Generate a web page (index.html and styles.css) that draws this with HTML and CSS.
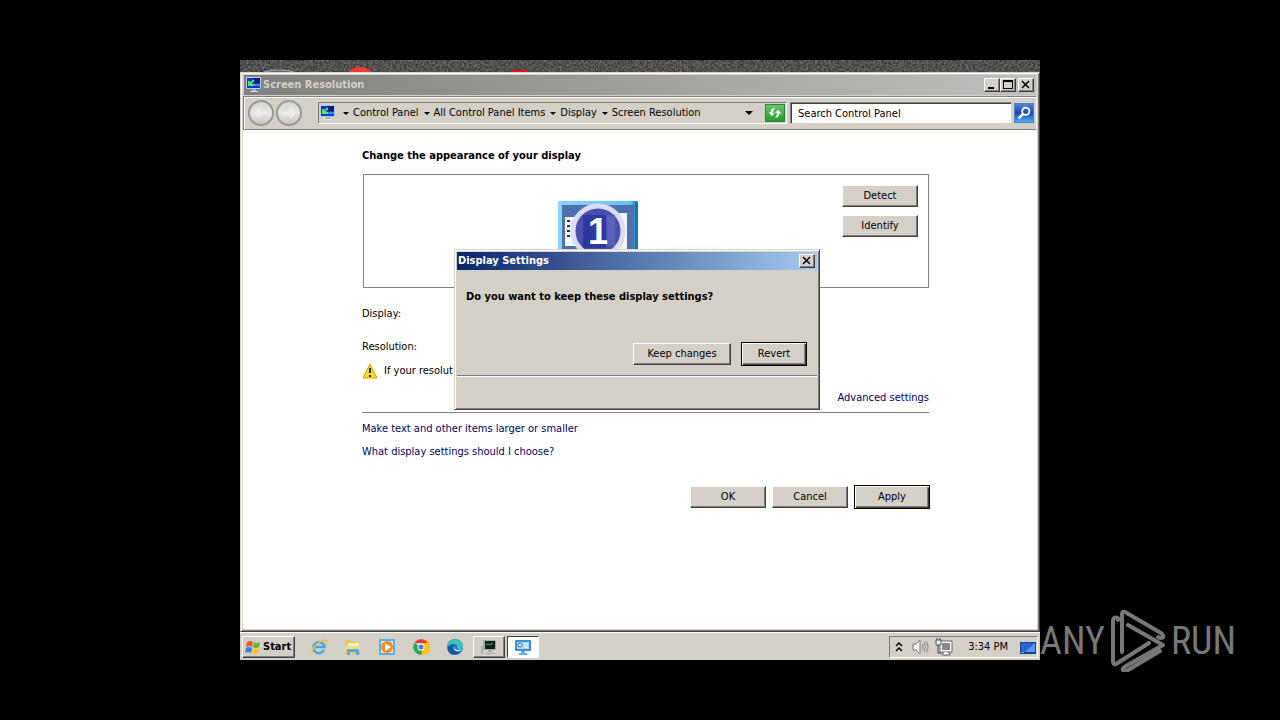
FILE: index.html
```html
<!DOCTYPE html>
<html lang="en">
<head>
<meta charset="utf-8">
<title>Screen Resolution</title>
<link rel="stylesheet" href="styles.css">
</head>
<body>
<svg class="defs" aria-hidden="true">
  <symbol id="monitor" viewBox="0 0 16 16">
    <rect x="0" y="0" width="15" height="12" rx="1" fill="#b9cbe6"/>
    <rect x="1" y="1" width="13" height="10" fill="#0a3fc4"/>
    <path d="M7 1h7v5H7z" fill="#071c70"/><path d="M8 7h6v2H8z" fill="#2f8df0"/>
    <path d="M8 3 4 7M3 4v4h5" stroke="#5fe06a" stroke-width="2" fill="none"/>
    <path d="M6 12h4v2H6z" fill="#9fb2c8"/><path d="M4 14h8v1H4z" fill="#d8e4f0"/>
  </symbol>
  <symbol id="close" viewBox="0 0 10 10"><path d="M1 1l7 7M8 1 1 8" stroke="#000" stroke-width="1.500"/></symbol>
</svg>
<div class="screen">
  <main class="desktop">
    <svg class="wallpaper" aria-hidden="true">
      <filter id="grain" color-interpolation-filters="sRGB"><feTurbulence type="fractalNoise" baseFrequency=".45" numOctaves="2" seed="4"/><feColorMatrix values=".4 0 0 0 .12  .4 0 0 0 .12  .4 0 0 0 .11  0 0 0 0 1"/></filter>
      <rect width="100%" height="100%" filter="url(#grain)"/>
      <ellipse cx="39" cy="16" rx="20" ry="6" fill="#666" stroke="#aaa"/>
      <circle cx="120" cy="24" r="17" fill="#f03a30"/>
      <path d="M271 10h17v3h-17z" fill="#e11"/>
    </svg>
    <section class="window">
      <header class="titlebar">
        <svg class="title-icon"><use href="#monitor"/></svg>
        <h1 class="title">Screen Resolution</h1>
        <button class="caption" aria-label="Minimize"><svg viewBox="0 0 10 10"><path d="M1 7h6v2H1z"/></svg></button>
        <button class="caption" aria-label="Maximize"><svg viewBox="0 0 10 10"><path d="M0 0h10v9H0zM1 2v6h8V2z" fill-rule="evenodd"/></svg></button>
        <button class="caption caption-close" aria-label="Close"><svg><use href="#close"/></svg></button>
      </header>
      <nav class="toolbar">
        <button class="round" aria-label="Back"><svg viewBox="0 0 26 26"><path d="M20 13H7m5-5-5 5 5 5"/></svg></button>
        <button class="round" aria-label="Forward"><svg viewBox="0 0 26 26"><path d="M6 13h13m-5-5 5 5-5 5"/></svg></button>
        <div class="address">
          <svg class="address-icon"><use href="#monitor"/></svg>
          <i class="arrow"></i><a href="#">Control Panel</a>
          <i class="arrow"></i><a href="#">All Control Panel Items</a>
          <i class="arrow"></i><a href="#">Display</a>
          <i class="arrow"></i><a href="#">Screen Resolution</a>
          <button class="history" aria-label="Previous locations"><i class="arrow arrow-large"></i></button>
          <button class="refresh" aria-label="Refresh"><svg viewBox="0 0 20 20"><path d="M2 9l4 5 4-4H7.500c0-3 1-4 2.500-6-4 0-5 2-5 5zM18 11l-4-5-4 4h2.500c0 3-1 4-2.500 6 4 0 5-2 5-5z" fill="#fff"/></svg></button>
        </div>
        <input class="search" type="text" aria-label="Search" placeholder="Search Control Panel">
        <button class="search-go" aria-label="Search"><svg viewBox="0 0 20 20"><circle cx="12" cy="8" r="4" fill="none" stroke="#fff" stroke-width="2"/><path d="M9 11l-5 5" stroke="#fff" stroke-width="3"/></svg></button>
      </nav>
      <div class="content">
        <h2 class="heading">Change the appearance of your display</h2>
        <div class="preview">
          <svg class="screen-one" viewBox="0 0 80 62" role="img" aria-label="Monitor 1">
            <defs><linearGradient id="frame" x2="1"><stop stop-color="#86d7fb"/><stop offset=".9" stop-color="#65c2f3"/><stop offset="1" stop-color="#1b73b8"/></linearGradient></defs>
            <rect width="80" height="62" rx="1" fill="url(#frame)"/>
            <path d="M77 1h3v61h-3z" fill="#1674b9"/>
            <rect x="4" y="4" width="72" height="58" fill="#4f70ae"/>
            <path d="M7 16h17v29H7zM58 12h11v37H58z" fill="#f4f5f8"/>
            <path d="M9 20h3M9 25h3M9 30h3M9 35h3" stroke="#333" stroke-width="2"/><path d="M14 20h3M14 25h3M14 30h3M14 35h3" stroke="#aaa"/>
            <circle cx="40" cy="30" r="25" fill="#4a50ad" stroke="#d8dcf4" stroke-width="5"/>
            <path d="M25 14h23v33H25z" fill="#3038a0"/><path d="M49 14h8v31h-8z" fill="#5960b7"/>
            <text x="40" y="43" text-anchor="middle" class="screen-number">1</text>
          </svg>
          <div class="preview-actions"><button class="button">Detect</button><button class="button">Identify</button></div>
        </div>
        <p class="field">Display:</p>
        <p class="field">Resolution:</p>
        <p class="warning"><svg viewBox="0 0 16 16"><path d="M8 1l7 14H1z" fill="#ffdc18" stroke="#d0a000" stroke-linejoin="round"/><path d="M8 5v5M8 12v2" stroke="#222" stroke-width="2"/></svg><span>If your resolut</span></p>
        <p class="advanced"><a href="#">Advanced settings</a></p>
        <p class="link-row"><a href="#">Make text and other items larger or smaller</a></p>
        <p class="link-row"><a href="#">What display settings should I choose?</a></p>
        <div class="actions"><button class="button">OK</button><button class="button">Cancel</button><button class="button button-default">Apply</button></div>
      </div>
    </section>
    <section class="dialog" role="dialog" aria-labelledby="dialog-title">
      <header class="dialog-bar"><h2 id="dialog-title" class="title">Display Settings</h2><button class="caption" aria-label="Close"><svg><use href="#close"/></svg></button></header>
      <p class="question">Do you want to keep these display settings?</p>
      <div class="dialog-actions"><button class="button button-wide">Keep changes</button><button class="button button-default">Revert</button></div>
      <div class="dialog-footer"></div>
    </section>
    <footer class="taskbar">
      <button class="start"><svg viewBox="0 0 18 18"><path d="M3 4q3-2 6 0L8 9Q5 7 2 9z" fill="#ef5a24"/><path d="M10 4q3 2 6 0l-1 5q-3 2-6 0z" fill="#65b62f"/><path d="M2 10q3-2 6 0l-1 5q-3-2-6 0z" fill="#2986d8"/><path d="M9 10q3 2 6 0l-1 5q-3 2-6 0z" fill="#fbc51c"/></svg>Start</button>
      <div class="tasks">
        <button class="task" aria-label="Internet Explorer"><svg viewBox="0 0 18 18"><path d="M14 12a5.500 5.500 0 1 1 .5-3H5" fill="none" stroke="#45a7e4" stroke-width="2.500"/><path d="M3 16C-1 13 8 3 15 2c2 0 2 2 1 4" fill="none" stroke="#efc24a" stroke-width="1.500"/></svg></button>
        <button class="task" aria-label="Explorer"><svg viewBox="0 0 18 18"><path d="M2 2h5l1 2h8v12H2z" fill="#e8c75f"/><path d="M4 5h11v7H4z" fill="#fff4b2"/><path d="M2 8h14v5H2z" fill="#f6dc82"/><path d="M3 17v-6h12v6h-3v-3H6v3z" fill="#58aee0"/></svg></button>
        <button class="task" aria-label="Media Player"><svg viewBox="0 0 18 18"><path d="M1 1h16v16H1z" fill="#5ab0e8"/><path d="M3 3h12v12H3z" fill="#d9eaf6"/><circle cx="9" cy="9" r="6" fill="#f58a1d"/><path d="M7 5l6 4-6 4z" fill="#fff"/></svg></button>
        <button class="task" aria-label="Chrome"><svg viewBox="0 0 18 18"><path d="M9 9V1.500h4A7.500 7.500 0 0 1 9 16.500z" fill="#fbc116"/><path d="M9 9l1 7.500A7.500 7.500 0 0 1 2.500 5z" fill="#2da94f"/><path d="M2.500 5a7.500 7.500 0 0 1 13 0H9z" fill="#e33b2e"/><circle cx="9" cy="9" r="3.500" fill="#fff"/><circle cx="9" cy="9" r="2.500" fill="#3b7ded"/></svg></button>
        <button class="task" aria-label="Edge"><svg viewBox="0 0 18 18"><circle cx="9" cy="9" r="8" fill="#1878c8"/><path d="M1 9C2-1 17-1 17 8c0 4-5 4-6 2 2-4-6-6-10-1z" fill="#39c2ba"/><path d="M8 7c-3 4 1 8 6 6-3 6-13 4-12-3 1-3 4-4 6-3z" fill="#1457a6"/><path d="M8 8c0 4 4 5 8 3l-2 2c-4 1-7-1-6-5z" fill="#e4f6fb"/></svg></button>
        <button class="task task-raised" aria-label="Display utility"><svg viewBox="0 0 18 18"><path d="M3 2h13v10H3z" fill="#a8aaaa"/><path d="M5 3h10v8H5z" fill="#0b211b"/><path d="M6 7l2-1 2 1 3-2" stroke="#4aaa7a" fill="none"/><path d="M8 12h4v2H8zM6 15h9v1H6z" fill="#a0a4a4"/><path d="M2 8v8" stroke="#888"/></svg></button>
        <button class="task task-active" aria-label="Screen Resolution"><svg viewBox="0 0 18 18"><rect x="1" y="2" width="16" height="11" rx="1" fill="#3a8fd2"/><path d="M3 4h12v7H3z" fill="#a7d7f3"/><circle cx="6" cy="7" r="2" fill="#fff" stroke="#256ba7"/><path d="M10 6h4M10 9h4" stroke="#fff"/><path d="M7 13h4v2H7zM5 15h8v2H5z" fill="#65aee0"/></svg></button>
      </div>
      <div class="tray">
        <svg class="chevron" viewBox="0 0 8 10"><path d="M1 4l3-3 3 3M1 9l3-3 3 3" fill="none" stroke="#000" stroke-width="1.500"/></svg>
        <svg class="tray-icon" viewBox="0 0 18 18"><path d="M2 6h3l4-4v14l-4-4H2z" fill="#f5f5f5" stroke="#777"/><path d="M11 6q2 3 0 6M13 4q3 5 0 10M15 3q4 6 0 12" stroke="#888" fill="none"/></svg>
        <svg class="tray-icon" viewBox="0 0 18 18"><path d="M5 3h12v11H5z" fill="#fff" stroke="#666"/><path d="M7 5h8v7H7z" fill="#888"/><path d="M9 14v1H7v2h8v-2h-2v-1" fill="#fff" stroke="#666"/><path d="M1 2h5v5H1z" fill="#eee" stroke="#555"/><path d="M2 0v2M5 0v2M3 7v8h3" stroke="#444" fill="none"/></svg>
        <time class="clock">3:34 PM</time>
        <svg class="tray-icon tray-display" viewBox="0 0 18 18"><path d="M1 4h16v12H1z" fill="#1b3f8e"/><path d="M2 5h14v9H2z" fill="#2766d4"/><path d="M6 14 16 5v9z" fill="#5898ed"/><path d="M2 14h3v1H2z" fill="#5c5"/></svg>
      </div>
    </footer>
  </main>
  <div class="watermark" aria-label="ANY RUN"><span>ANY</span><svg viewBox="0 0 56 62"><g fill="none" stroke="#777" stroke-width="4" stroke-linejoin="round" stroke-linecap="round"><path d="M8 10V8q-5-2-5 3v40q0 4 3 3l33-21"/><path d="M12 42V4q0-3 3-2l36 21q3 2 2 4-2 2-5 0"/><path d="M18 15l35 20-37 21q-4 2-3 4 1 2 5 0l32-19"/></g></svg><span>RUN</span></div>
</div>
</body>
</html>
```
FILE: styles.css
```css
* { box-sizing: border-box; }
body { margin: 0; background: #000; color: #000; font: 11px/16px Tahoma, "DejaVu Sans Condensed", "DejaVu Sans", sans-serif; }
h1, h2, p { margin: 0; font-size: 11px; }
button, input { font: inherit; color: inherit; }
button { padding: 0; border: 0; border-radius: 0; }
svg { display: block; }
a { color: #000066; text-decoration: none; white-space: nowrap; }
.defs { position: absolute; width: 0; height: 0; }
.screen { display: grid; grid-template-columns: 3fr 10fr 3fr; min-height: 100vh; padding: 60px 0; }
.desktop { position: relative; grid-column: 2; display: flex; flex-direction: column; background: #d4d0c8; }
.wallpaper { width: 100%; height: 12px; background: #555; }

.window { flex: 1; display: flex; flex-direction: column; padding: 2px; border: 1px solid #d4d0c8; border-right-color: #404040; border-bottom-color: #404040; box-shadow: inset 1px 1px #fff, inset -1px -1px #808080; }
.titlebar { display: flex; align-items: center; height: 20px; margin: 0 1px 1px; padding: 0 2px; background: linear-gradient(90deg, #808080, #c0c0c0); color: #d4d0c8; }
.title { flex: 1; white-space: nowrap; }
.title-icon { width: 16px; height: 16px; margin-right: 1px; }
.caption { display: grid; place-items: center; width: 16px; height: 14px; background: #d4d0c8; border: 1px solid #fff; border-right-color: #404040; border-bottom-color: #404040; box-shadow: inset -1px -1px #808080; }
.caption svg { width: 10px; height: 10px; }
.caption-close { margin-left: 2px; }
.toolbar { display: flex; align-items: center; gap: 2px; height: 34px; padding: 0 2px 0 4px; background: #d4d0c8; border: 1px solid #808080; border-right-color: #fff; box-shadow: inset 1px 1px #fff; }
.round { width: 26px; height: 26px; border: 2px solid #999; border-radius: 50%; background: linear-gradient(#d8d6d2, #e8e7e5 50%, #c8c6c2); }
.round svg { width: 22px; height: 22px; fill: none; stroke: #eeedeb; stroke-width: 3; }
.address { flex: 1; display: flex; align-items: center; height: 22px; margin-left: 14px; padding-left: 1px; border: 1px solid #808080; border-right-color: #fff; border-bottom-color: #fff; }
.address a { color: #000; }
.address-icon { width: 16px; height: 16px; margin-right: 2px; }
.arrow { margin: 0 4px 0 5px; border: 3px solid transparent; border-top-color: #000; border-bottom: 0; }
.arrow-large { margin: 0; border-width: 4px 4px 0; }
.history { display: grid; place-items: center; width: 16px; height: 18px; margin-left: auto; background: none; }
.refresh { width: 20px; height: 18px; margin: 0 1px 0 8px; border: 1px solid #268a35; background: linear-gradient(#6bc36d, #239b31); }
.refresh svg { width: 18px; height: 16px; }
.search { width: 222px; height: 22px; margin-left: 1px; padding: 0 7px; border: 1px solid #808080; border-right-color: #d4d0c8; border-bottom-color: #d4d0c8; box-shadow: inset 1px 1px #404040; background: #fff; }
.search::placeholder { color: #000; opacity: 1; }
.search-go { width: 20px; height: 20px; border: 1px solid #4c82c8; background: linear-gradient(#5482d8, #1845bb 50%, #4cb0ed); }
.search-go svg { width: 18px; height: 18px; }

.content { flex: 1; padding: 18px 107px 0 119px; background: #fff; }
.preview { display: flex; justify-content: flex-end; height: 114px; margin: 10px 1px 0; padding: 10px; border: 1px solid #808080; }
.screen-one { width: 80px; height: 62px; margin: 16px auto 0 184px; }
.screen-number { font: bold 36px "Liberation Sans", Arial, sans-serif; fill: #fff; }
.preview-actions { display: flex; flex-direction: column; gap: 8px; }
.button { min-width: 76px; height: 22px; background: #d4d0c8; border: 1px solid #fff; border-right-color: #404040; border-bottom-color: #404040; box-shadow: inset -1px -1px #808080; white-space: nowrap; }
.button-default { height: 24px; border-color: #000; box-shadow: inset 1px 1px #fff, inset -1px -1px #404040, inset -2px -2px #808080; }
.field { margin-top: 17px; }
.preview + .field { margin-top: 18px; }
.warning { display: flex; gap: 6px; margin-top: 8px; white-space: nowrap; }
.warning svg { width: 16px; height: 16px; }
.advanced { margin: 11px 1px 0 0; padding-bottom: 6px; border-bottom: 1px solid #808080; text-align: right; }
.link-row { margin-top: 7px; }
.advanced + .link-row { margin-top: 8px; }
.actions { display: flex; justify-content: flex-end; align-items: center; gap: 6px; margin-top: 25px; }

.dialog { position: absolute; top: 189px; left: 214px; width: 366px; padding: 2px; background: #d4d0c8; border: 1px solid #d4d0c8; border-right-color: #404040; border-bottom-color: #404040; box-shadow: inset 1px 1px #fff, inset -1px -1px #808080; }
.dialog-bar { display: flex; align-items: center; height: 18px; padding: 0 2px 0 1px; background: linear-gradient(90deg, #0a246a, #a6caf0); color: #fff; }
.question { margin: 19px 9px 0; font-weight: bold; }
.dialog-actions { display: flex; justify-content: flex-end; align-items: center; gap: 10px; margin: 37px 10px 9px; }
.dialog-actions .button { min-width: 66px; }
.dialog-actions .button-wide { min-width: 98px; }
.dialog-footer { height: 32px; border-top: 1px solid #808080; box-shadow: inset 0 1px #fff; }

.taskbar { display: flex; align-items: center; height: 28px; padding: 0 2px; border-top: 1px solid #fff; }
.start { display: flex; align-items: center; gap: 1px; height: 22px; padding: 0 3px 0 1px; border: 1px solid #fff; border-right-color: #404040; border-bottom-color: #404040; box-shadow: inset -1px -1px #808080; background: #d4d0c8; font-weight: bold; }
.start svg { width: 18px; height: 18px; }
.tasks { display: flex; gap: 2px; margin-left: 8px; }
.task { display: grid; place-items: center; width: 32px; height: 22px; background: none; }
.task svg { width: 18px; height: 18px; }
.task-raised { border: 1px solid #fff; border-right-color: #404040; border-bottom-color: #404040; box-shadow: inset -1px -1px #808080; }
.task-active { border: 1px solid #404040; border-right-color: #fff; border-bottom-color: #fff; background: #fff; }
.tray { display: flex; align-items: center; height: 22px; margin-left: auto; padding: 0 0 0 5px; border: 1px solid #808080; border-right-color: #fff; border-bottom-color: #fff; }
.chevron { width: 8px; height: 10px; margin-right: 8px; }
.tray-icon { width: 18px; height: 18px; margin-right: 6px; }
.clock { margin: 0 11px 0 9px; }
.tray-display { margin-right: 0; }

.watermark { grid-column: 3; align-self: end; display: flex; align-items: center; height: 62px; margin-bottom: -12px; gap: 5px; color: #777; font: 38px/64px "Roboto Condensed", "Liberation Sans Narrow", Roboto, sans-serif; }
.watermark svg { flex: none; width: 56px; height: 62px; }
```
